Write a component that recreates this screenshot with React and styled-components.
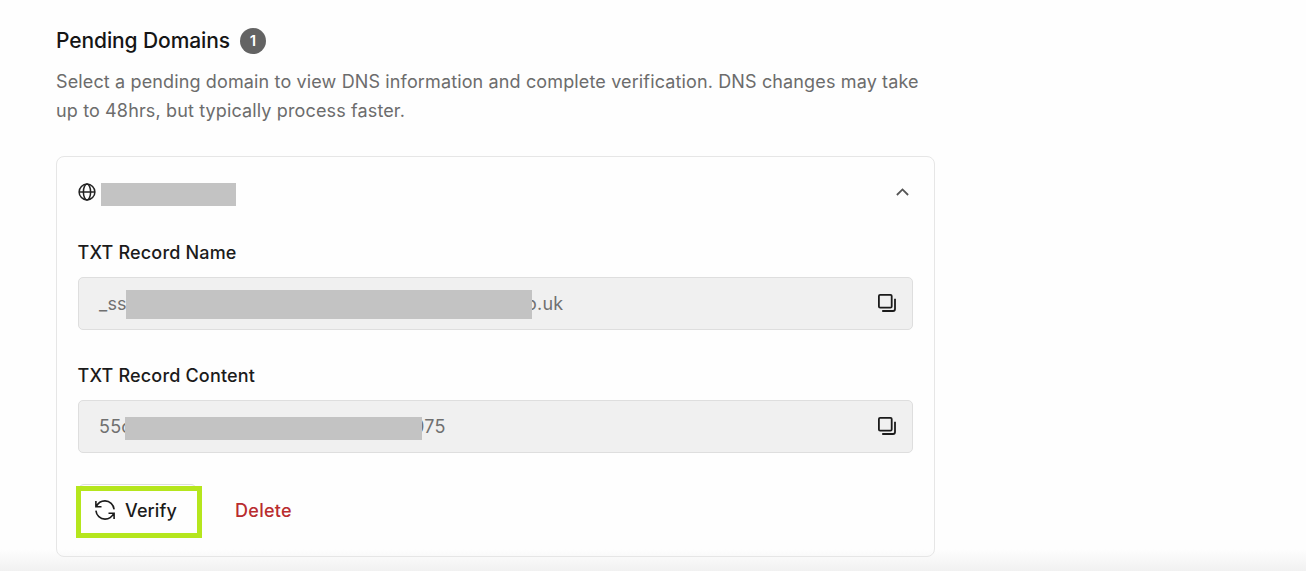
import React from "react";
import styled, { createGlobalStyle } from "styled-components";

const GlobalStyle = createGlobalStyle`
    * {
        box-sizing: border-box;
    }

    body {
        margin: 0;
        background-color: #fff;
        font-family: "Inter", sans-serif;
        overflow: hidden;
    }
`;

const Page = styled.main`
    height: 571px;
    padding: 26px 0 0 56px;
    background: linear-gradient(to bottom, #fefefe 0, #fefefe 549px, #f1f1f1 571px);
`;

const Section = styled.section`
    width: 879px;
`;

const Heading = styled.div`
    display: flex;
    align-items: center;
    gap: 10px;
    height: 30px;
`;

const Title = styled.h2`
    width: 174px;
    margin: 0;
    font-size: 21px;
    font-weight: 500;
    line-height: 30px;
    letter-spacing: -0.1px;
    white-space: nowrap;
    color: #151515;
`;

const Count = styled.span`
    width: 26px;
    height: 26px;
    border-radius: 50%;
    background-color: #636363;
    color: #fff;
    font-size: 15px;
    font-weight: 600;
    line-height: 26px;
    text-align: center;
`;

const Description = styled.p`
    margin: 11px 0 31px;
    font-size: 18px;
    line-height: 29px;
    letter-spacing: 0.135px;
    color: #6c6c6c;
    white-space: nowrap;
`;

const Card = styled.article`
    height: 401px;
    padding: 20px 21px 0;
    border: 1px solid #e6e6e6;
    border-radius: 8px;
`;

const CardHeader = styled.header`
    display: flex;
    align-items: center;
    height: 32px;

    > svg {
        margin-bottom: 2px;
    }

    > svg:last-child {
        margin-left: auto;
        margin-right: 4px;
    }
`;

const Mask = styled.span`
    position: relative;
    z-index: 1;
    flex: none;
    width: ${({ $width }) => $width}px;
    height: ${({ $height }) => $height}px;
    margin: ${({ $margin }) => $margin || "0"};
    background-color: #c3c3c3;
`;

const Record = styled.div`
    margin-top: ${({ $gap }) => $gap}px;
`;

const Label = styled.div`
    height: 26px;
    margin-left: -0.5px;
    font-size: 18px;
    font-weight: 500;
    line-height: 26px;
    letter-spacing: 0.18px;
    color: #1b1b1b;
`;

const Field = styled.div`
    display: flex;
    align-items: center;
    height: 53px;
    margin-top: 11px;
    padding: 0 15px 0 20px;
    border: 1px solid #dedede;
    border-radius: 5px;
    background-color: #f0f0f0;
    color: #707070;
    font-size: 18px;
    letter-spacing: 0.2px;

    > svg {
        margin-left: auto;
        margin-bottom: 1px;
    }
`;

const Value = styled.span`
    width: ${({ $width }) => ($width ? `${$width}px` : "auto")};
    margin-left: ${({ $shift }) => $shift || 0}px;
    white-space: nowrap;
`;

const Actions = styled.div`
    display: flex;
    align-items: center;
    height: 52px;
    margin-top: 31px;
`;

const VerifyButton = styled.button`
    position: relative;
    display: flex;
    align-items: center;
    gap: 9px;
    width: 119px;
    height: 52px;
    padding: 0 0 0 15px;
    border: 1px solid #dedede;
    border-radius: 6px;
    background: none;
    color: #1b1b1b;
    font: 500 18px "Inter", sans-serif;
    letter-spacing: 0.1px;
`;

const Highlight = styled.span`
    position: absolute;
    top: 1px;
    left: -3px;
    width: 126px;
    height: 52px;
    border: 5px solid #b5e61d;
    background-color: transparent;
    box-shadow: inset 0 0 0 2px #fefefe;
`;

const DeleteButton = styled.button`
    margin-left: 38px;
    padding: 0;
    border: none;
    background: none;
    color: #b92c2f;
    font: 500 18px "Inter", sans-serif;
    letter-spacing: 0.3px;
`;

const GlobeIcon = () => (
    <svg width="18" height="18" viewBox="0 0 18 18" fill="none" stroke="#222" strokeWidth="1.5">
        <circle cx="9" cy="9" r="7.9" />
        <ellipse cx="9" cy="9" rx="3.6" ry="7.9" />
        <path d="M1 9h16" />
    </svg>
);

const ChevronIcon = () => (
    <svg width="13" height="8" viewBox="0 0 13 8" fill="none" stroke="#555" strokeWidth="1.8">
        <path d="M0.9 7 6.5 1.4 12.1 7" />
    </svg>
);

const CopyIcon = () => (
    <svg width="20" height="20" viewBox="0 0 20 20" fill="none" stroke="#1b1b1b" strokeWidth="1.8">
        <rect x="1.9" y="1.9" width="12.8" height="12.8" rx="1.2" />
        <path d="M18 5.8V16a2 2 0 0 1-2 2H5.2" />
    </svg>
);

const RefreshIcon = () => (
    <svg width="22" height="22" viewBox="0 0 22 22" fill="none" stroke="#1b1b1b" strokeWidth="1.6">
        <path d="M1.9 2.1v5.6h5.6M2.3 7.5C4 3.9 7.4 1.9 11 1.9c4.8 0 8.6 3.6 9.1 8.4" />
        <path d="M20.1 19.9v-5.6h-5.6M19.7 14.5C18 18.1 14.6 20.1 11 20.1c-4.8 0-8.6-3.6-9.1-8.4" />
    </svg>
);

const App = () => {
    return (
        <>
            <GlobalStyle />
            <Page>
                <Section>
                    <Heading>
                        <Title>Pending Domains</Title>
                        <Count>1</Count>
                    </Heading>
                    <Description>
                        Select a pending domain to view DNS information and complete verification. DNS changes may take
                        <br />
                        up to 48hrs, but typically process faster.
                    </Description>
                    <Card>
                        <CardHeader>
                            <GlobeIcon />
                            <Mask $width={135} $height={23} $margin="3px 0 0 5px" />
                            <ChevronIcon />
                        </CardHeader>
                        <Record $gap={31}>
                            <Label>TXT Record Name</Label>
                            <Field>
                                <Value $width={27}>_ss</Value>
                                <Mask $width={406} $height={29} $margin="1px 0 0 0" />
                                <Value $shift={-6}>o.uk</Value>
                                <CopyIcon />
                            </Field>
                        </Record>
                        <Record $gap={33}>
                            <Label>TXT Record Content</Label>
                            <Field>
                                <Value $width={26}>55c</Value>
                                <Mask $width={297} $height={23} $margin="3px 0 0 0" />
                                <Value $shift={-9}>075</Value>
                                <CopyIcon />
                            </Field>
                        </Record>
                        <Actions>
                            <VerifyButton type="button">
                                <RefreshIcon />
                                Verify
                                <Highlight />
                            </VerifyButton>
                            <DeleteButton type="button">Delete</DeleteButton>
                        </Actions>
                    </Card>
                </Section>
            </Page>
        </>
    );
};

export default App;
